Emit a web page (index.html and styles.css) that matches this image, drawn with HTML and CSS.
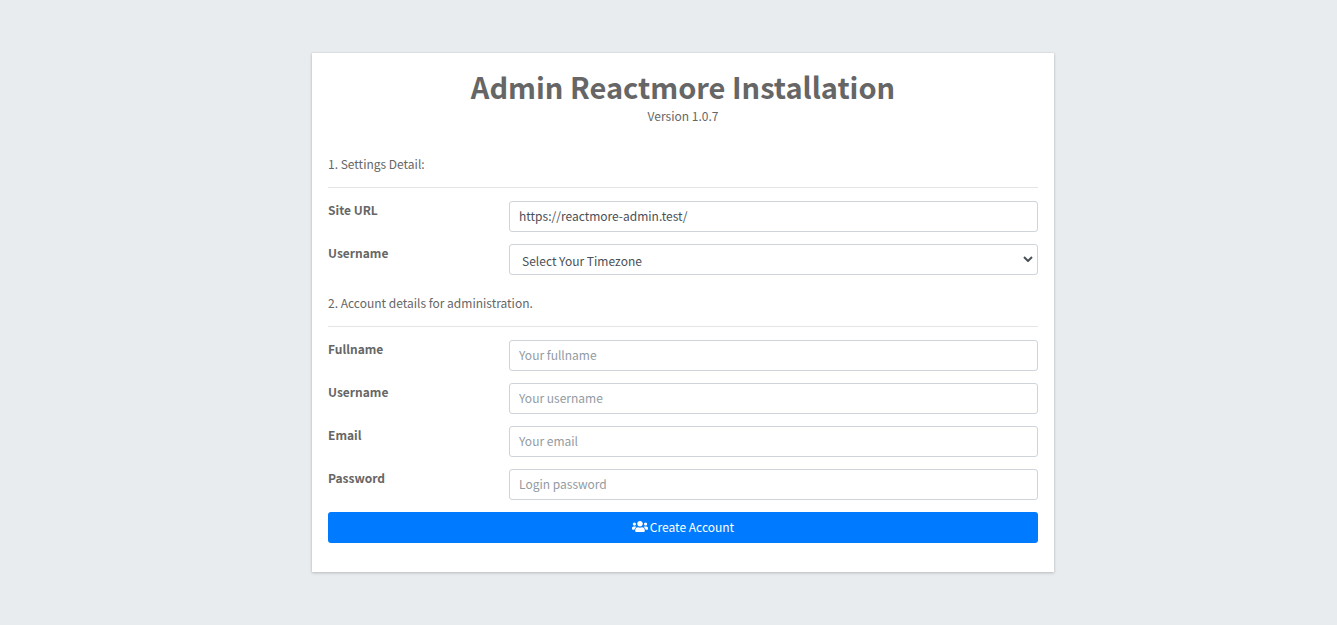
FILE: index.html
```html
<!DOCTYPE html>
<html lang="en">
<head>
<meta charset="utf-8">
<meta name="viewport" content="width=device-width, initial-scale=1">
<title>Admin Reactmore Installation</title>
<link rel="stylesheet" href="styles.css">
</head>
<body class="page">
<main class="card">
  <header class="card-header">
    <h1 class="title">Admin Reactmore Installation</h1>
    <p class="version">Version 1.0.7</p>
  </header>
  <form class="form">
    <section class="section">
      <p class="section-title">1. Settings Detail:</p>
      <div class="row">
        <label class="label" for="site-url">Site URL</label>
        <input class="control" id="site-url" type="text" value="https://reactmore-admin.test/">
      </div>
      <div class="row">
        <label class="label" for="timezone">Username</label>
        <div class="select-wrap">
          <select class="control select" id="timezone"><option>Select Your Timezone</option></select>
          <svg class="chevron" viewBox="0 0 10 6" aria-hidden="true"><path d="M1 1l4 4 4-4"/></svg>
        </div>
      </div>
    </section>
    <section class="section">
      <p class="section-title">2. Account details for administration.</p>
      <div class="row">
        <label class="label" for="fullname">Fullname</label>
        <input class="control" id="fullname" type="text" placeholder="Your fullname">
      </div>
      <div class="row">
        <label class="label" for="username">Username</label>
        <input class="control" id="username" type="text" placeholder="Your username">
      </div>
      <div class="row">
        <label class="label" for="email">Email</label>
        <input class="control" id="email" type="email" placeholder="Your email">
      </div>
      <div class="row">
        <label class="label" for="password">Password</label>
        <input class="control" id="password" type="password" placeholder="Login password">
      </div>
      <button class="submit" type="submit">
        <svg class="users" viewBox="0 0 640 512" aria-hidden="true"><path d="M96 224c35.300 0 64-28.700 64-64s-28.700-64-64-64-64 28.700-64 64 28.700 64 64 64zm448 0c35.300 0 64-28.700 64-64s-28.700-64-64-64-64 28.700-64 64 28.700 64 64 64zm32 32h-64c-17.600 0-33.500 7.100-45.100 18.600 40.300 22.100 68.900 62 75.100 109.400h66c17.700 0 32-14.300 32-32v-32c0-35.300-28.700-64-64-64zm-256 0c61.900 0 112-50.100 112-112S381.900 32 320 32 208 82.100 208 144s50.100 112 112 112zm76.800 32h-8.300c-20.800 10-43.900 16-68.500 16s-47.600-6-68.500-16h-8.300C179.600 288 128 339.600 128 403.200V432c0 26.500 21.500 48 48 48h288c26.500 0 48-21.500 48-48v-28.800c0-63.600-51.600-115.200-115.200-115.200zm-223.700-13.400C161.500 263.100 145.600 256 128 256H64c-35.300 0-64 28.700-64 64v32c0 17.700 14.300 32 32 32h65.900c6.300-47.400 34.900-87.300 75.200-109.400z"/></svg>
        <span>Create Account</span>
      </button>
    </section>
  </form>
</main>
</body>
</html>
```
FILE: styles.css
```css
* {
  box-sizing: border-box;
}

.page {
  margin: 0;
  min-height: 100vh;
  padding: 32px 0 32px 29px;
  display: flex;
  align-items: center;
  justify-content: center;
  background: #e9ecef;
  color: #666;
  font-family: "Noto Sans CJK SC", "Noto Sans", sans-serif;
  font-size: 12px;
  line-height: 19px;
}

.card {
  width: 100%;
  max-width: 742px;
  padding: 16px 16px 29px;
  background: #fff;
  box-shadow: 0 0 1px rgba(0, 0, 0, .125), 0 1px 3px rgba(0, 0, 0, .2);
}

.card-header {
  margin-bottom: 29px;
  text-align: center;
}

.title {
  margin: 0 0 2px;
  font-size: 29px;
  font-weight: 700;
  line-height: 35px;
}

.version {
  margin: 0;
}

.form {
  display: flex;
  flex-direction: column;
  gap: 18px;
}

.section {
  display: flex;
  flex-direction: column;
  gap: 12px;
}

.section-title {
  margin: 0 0 1px;
  padding-bottom: 14px;
  border-bottom: 1px solid #e5e5e5;
}

.row {
  display: grid;
  grid-template-columns: 25.5% 1fr;
  align-items: start;
}

.label {
  font-weight: 700;
  line-height: 18px;
}

.control {
  display: block;
  width: 100%;
  height: 31px;
  margin: 0;
  padding: 4px 9px 6px;
  border: 1px solid #ced4da;
  border-radius: 3px;
  background: #fff;
  color: #495057;
  font: inherit;
}

.control::placeholder {
  color: #939ba2;
  opacity: 1;
}

.select-wrap {
  position: relative;
}

.select {
  appearance: none;
  padding: 5px 24px 4px 12px;
}

.chevron {
  position: absolute;
  top: 12px;
  right: 5px;
  width: 10px;
  height: 6px;
  fill: none;
  stroke: #495057;
  stroke-width: 2;
  pointer-events: none;
}

.submit {
  display: flex;
  align-items: center;
  justify-content: center;
  gap: 2px;
  height: 31px;
  padding: 0 8px 2px;
  border: 0;
  border-radius: 3px;
  background: #007bff;
  color: #fff;
  font: inherit;
  cursor: pointer;
}

.users {
  width: 16px;
  height: 13px;
  fill: currentColor;
}
```
